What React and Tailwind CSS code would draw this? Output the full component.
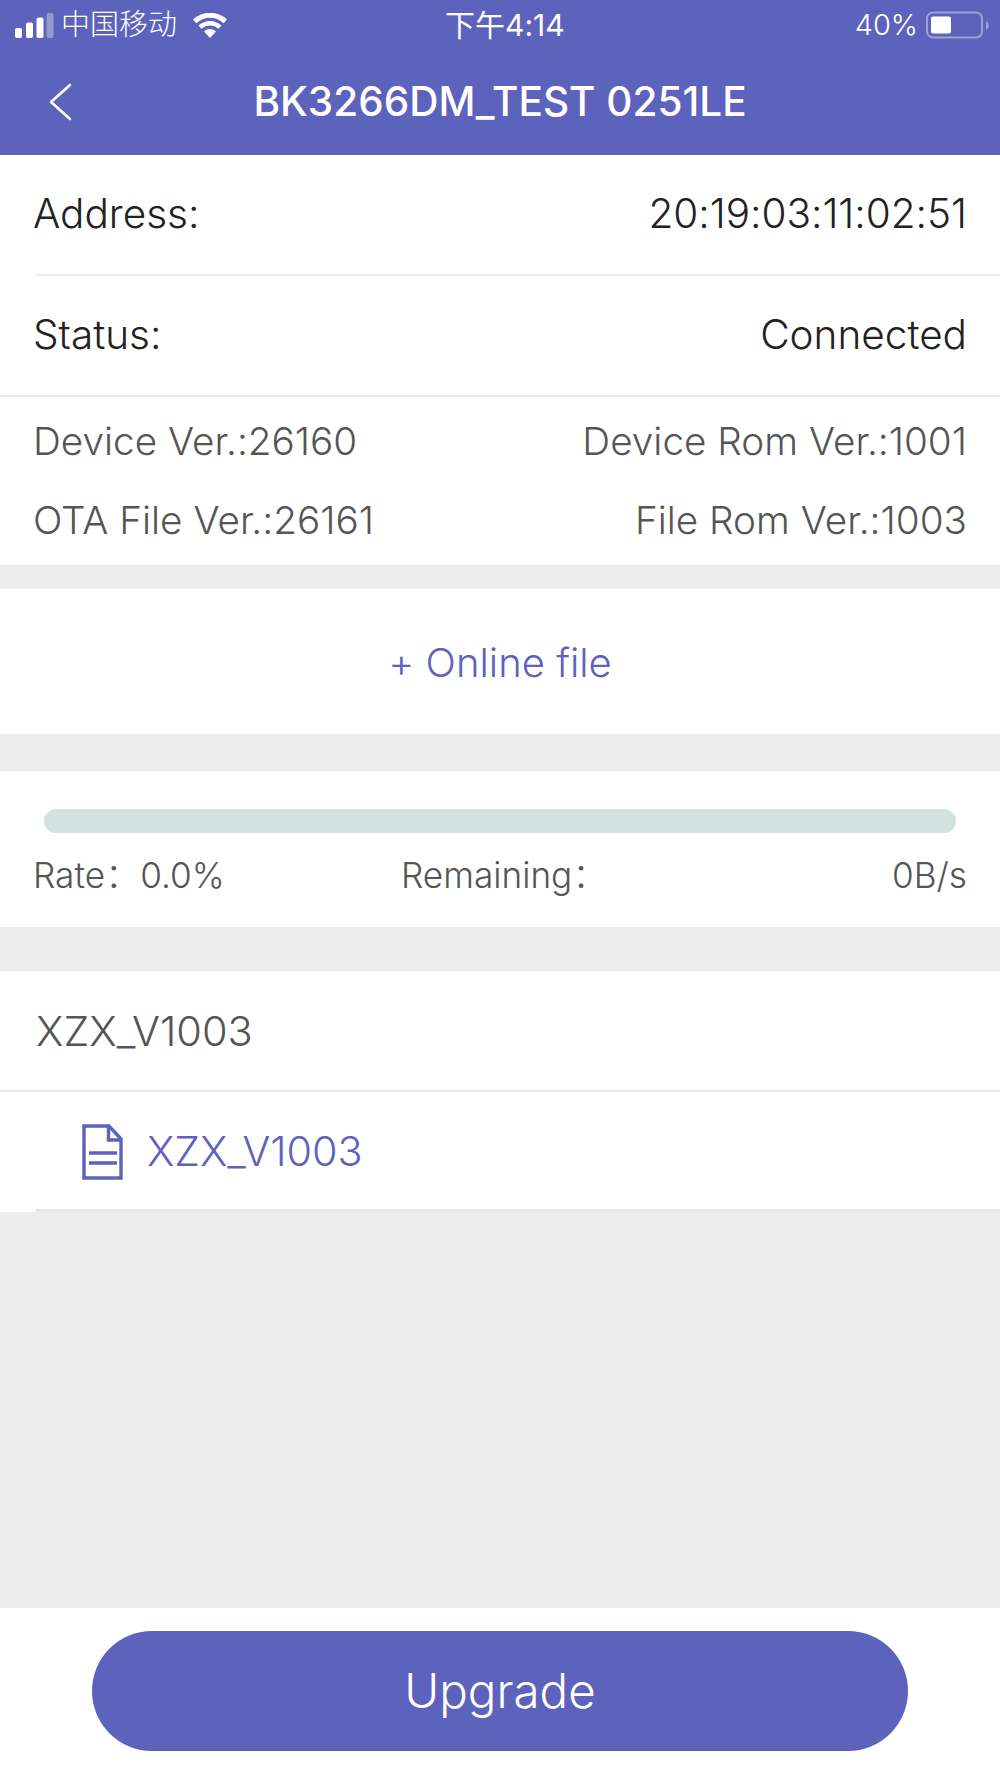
import React from "react";

const cjk = "font-['Inter','Noto_Sans_CJK_SC',sans-serif] [font-feature-settings:'calt'_0]";

const StatusBar = () => (
  <div className="relative h-[50px] flex items-center justify-between pl-[15px] pr-[10px] text-white">
    <div className="flex items-center">
      {/* signal bars */}
      <svg width="39" height="25" viewBox="0 0 39 25" className="block">
        <rect x="0" y="15" width="7" height="10" rx="2" fill="#fff" />
        <rect x="11" y="9.5" width="7" height="15.5" rx="2" fill="#fff" />
        <rect x="21.5" y="4.5" width="7" height="20.5" rx="2" fill="#fff" />
        <rect x="31.5" y="0" width="7" height="25" rx="2" fill="#fff" fillOpacity="0.35" />
      </svg>
      <span className="ml-[7px] text-[29px] leading-[30px] font-light">中国移动</span>
      {/* wifi */}
      <svg width="34" height="25" viewBox="0 0 34 25" className="block ml-[16px]">
        <path d="M17 25l-6-6.5a8.6 8.6 0 0 1 12 0z" fill="#fff" />
        <path d="M8.6 15.8l-3-3.2a16.6 16.6 0 0 1 22.8 0l-3 3.2a12.2 12.2 0 0 0-16.8 0z" fill="#fff" />
        <path d="M3.4 10.2L0 6.6a24.7 24.7 0 0 1 34 0l-3.4 3.6a19.8 19.8 0 0 0-27.2 0z" fill="#fff" />
      </svg>
    </div>
    <div className="absolute left-[445px] top-[10px] text-[30px] leading-[30px] font-normal whitespace-nowrap">下午4:14</div>
    <div className="flex items-center">
      <span className="text-[29px] leading-[30px] font-light">40%</span>
      {/* battery */}
      <svg width="64" height="28" viewBox="0 0 64 28" className="block ml-[8px]">
        <rect x="1" y="1.5" width="55" height="25" rx="6" fill="none" stroke="#fff" strokeOpacity="0.4" strokeWidth="2" />
        <rect x="5" y="5.5" width="20" height="17" rx="2" fill="#fff" />
        <path d="M60 10a5 5 0 0 1 0 9z" fill="#fff" fillOpacity="0.4" />
      </svg>
    </div>
  </div>
);

const NavBar = () => (
  <div className="relative h-[105px] flex items-start justify-center pt-[31px]">
    <svg width="24" height="38" viewBox="0 0 24 38" className="absolute left-[48px] top-[33px]">
      <path d="M22 2L3 19l19 17" fill="none" stroke="#fff" strokeWidth="2.6" strokeLinecap="round" strokeLinejoin="round" />
    </svg>
    <h1 className="text-[40.5px] leading-[42px] font-medium text-white whitespace-nowrap">BK3266DM_TEST 0251LE</h1>
  </div>
);

const App = () => {
  return (
    <div className={`${cjk} w-[1000px] h-[1778px] flex flex-col bg-[#ededed] overflow-hidden`}>
      <header className="bg-[#5d62bd]">
        <StatusBar />
        <NavBar />
      </header>

      {/* Device info */}
      <section className="bg-white">
        <div className="h-[119px] flex items-center justify-between px-[33px] text-[40.5px] font-[350] text-[#222222]">
          <span>Address:</span>
          <span>20:19:03:11:02:51</span>
        </div>
        <div className="ml-[36px] h-[2px] bg-[#ececec]" />
        <div className="h-[119px] flex items-center justify-between px-[33px] text-[40.5px] font-[350] text-[#222222]">
          <span>Status:</span>
          <span>Connected</span>
        </div>
        <div className="h-[2px] bg-[#ececec]" />
        <div className="h-[168px] flex flex-col px-[33px] pt-[21px] gap-[34px] text-[38.7px] leading-[46px] text-[#555555] font-light">
          <div className="flex justify-between">
            <span>Device Ver.:26160</span>
            <span>Device Rom Ver.:1001</span>
          </div>
          <div className="flex justify-between -mt-[1px]">
            <span>OTA File Ver.:26161</span>
            <span>File Rom Ver.:1003</span>
          </div>
        </div>
      </section>

      {/* Online file */}
      <section className="mt-[24px] h-[145px] bg-white flex items-center justify-center pt-[2px] text-[40px] font-[350] text-[#5d62bd]">
        + Online file
      </section>

      {/* Progress */}
      <section className="mt-[37px] h-[156px] bg-white flex flex-col px-[33px] pt-[38px]">
        <div className="mx-[11px] h-[24px] rounded-full bg-[#d2e2de]" />
        <div className="mt-[20px] grid grid-cols-[368px_1fr_auto] text-[35.2px] leading-[44px] text-[#555555] font-light">
          <span>Rate：0.0%</span>
          <span>Remaining：</span>
          <span>0B/s</span>
        </div>
      </section>

      {/* File list */}
      <section className="mt-[44px] bg-white">
        <div className="h-[119px] flex items-center pl-[36px] pt-[2px] text-[41.5px] text-[#555555] font-light">XZX_V1003</div>
        <div className="h-[2px] bg-[#e8e8e8]" />
        <div className="h-[120px] flex items-center pl-[82px] text-[41.3px] text-[#5d62bd] font-light">
          <svg width="41" height="56" viewBox="0 0 41 56" className="block mr-[24px]">
            <path d="M2 2h25l12 13v39H2z" fill="none" stroke="#5d62bd" strokeWidth="3.4" />
            <path d="M26.5 2v14H39" fill="none" stroke="#5d62bd" strokeWidth="3.4" />
            <path d="M7 29h28M7 39h28" fill="none" stroke="#5d62bd" strokeWidth="3.4" />
          </svg>
          <span>XZX_V1003</span>
        </div>
      </section>
      <div className="ml-[36px] h-[3px] bg-[#e6e6e6] -mt-[3px]" />

      <div className="flex-1" />

      {/* Bottom action */}
      <footer className="h-[170px] bg-white flex justify-center pt-[23px]">
        <button type="button" className="w-[816px] h-[120px] rounded-full bg-[#5d62bd] text-white text-[47.5px] font-light">
          Upgrade
        </button>
      </footer>
    </div>
  );
};

export default App;
